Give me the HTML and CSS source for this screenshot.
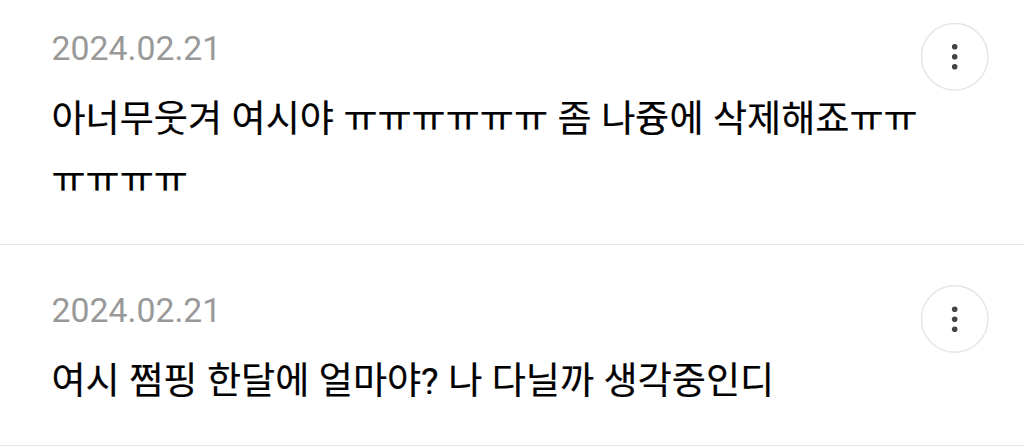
FILE: index.html
```html
<!DOCTYPE html>
<html lang="ko">

<head>
  <meta charset="UTF-8" />
  <meta name="viewport" content="width=device-width, initial-scale=1.0" />
  <title>댓글</title>
  <link rel="stylesheet" href="styles.css">
</head>

<body>
  <ul class="comment-list">
    <li class="comment">
      <div class="comment-body">
        <time class="date" datetime="2024-02-21">2024.02.21</time>
        <p class="text">아너무웃겨 여시야 ㅠㅠㅠㅠㅠㅠ 좀 나즁에 삭제해죠ㅠㅠ<br>ㅠㅠㅠㅠ</p>
      </div>
      <button class="more" type="button" aria-label="더보기">
        <svg width="68" height="68" viewBox="0 0 68 68">
          <circle class="ring" cx="33.7" cy="33.8" r="33.3" />
          <circle cx="33.7" cy="23.8" r="2.8" />
          <circle cx="33.7" cy="33.8" r="2.8" />
          <circle cx="33.7" cy="43.8" r="2.8" />
        </svg>
      </button>
    </li>
    <li class="comment">
      <div class="comment-body">
        <time class="date" datetime="2024-02-21">2024.02.21</time>
        <p class="text">여시 쩜핑 한달에 얼마야? 나 다닐까 생각중인디</p>
      </div>
      <button class="more" type="button" aria-label="더보기">
        <svg width="68" height="68" viewBox="0 0 68 68">
          <circle class="ring" cx="33.7" cy="34" r="33.3" />
          <circle cx="33.7" cy="24.2" r="2.8" />
          <circle cx="33.7" cy="34.2" r="2.8" />
          <circle cx="33.7" cy="44.2" r="2.8" />
        </svg>
      </button>
    </li>
  </ul>
</body>

</html>
```
FILE: styles.css
```css
* {
  box-sizing: border-box;
}

body {
  margin: 0;
  background: #fff;
  color: #000;
  font-family: Roboto, "Noto Sans CJK KR", sans-serif;
  overflow: hidden;
}

.comment-list {
  margin: 0;
  padding: 0;
  list-style: none;
}

.comment {
  display: flex;
  justify-content: space-between;
  align-items: flex-start;
  height: 201px;
  padding: 40px 35px 0 51.5px;
  border-bottom: 1px solid #e5e5e5;
}

.comment:first-child {
  height: 245px;
  padding-top: 23px;
}

.comment-body {
  flex: 1;
  min-width: 0;
  padding-top: 6px;
}

.date {
  display: block;
  height: 40px;
  line-height: 40px;
  font-size: 33.8px;
  color: #999;
}

.text {
  margin: 20px 0 0;
  line-height: 61px;
  font-size: 37.1px;
  word-spacing: 0.3px;
  white-space: nowrap;
  -webkit-text-stroke: 0.2px #000;
}

.more {
  flex: none;
  width: 68px;
  height: 68px;
  padding: 0;
  border: none;
  background: none;
  cursor: pointer;
}

.more svg {
  display: block;
  fill: #444;
}

.more .ring {
  fill: #fff;
  stroke: #e5e5e5;
  stroke-width: 1.4;
}
```
